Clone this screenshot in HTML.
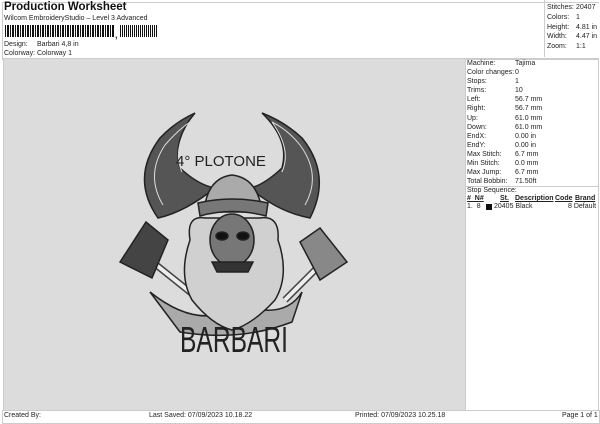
<!DOCTYPE html>
<html><head><style>
body{margin:0;width:600px;height:424px;background:#fff;font-family:"Liberation Sans",sans-serif;color:#222;position:relative;overflow:hidden}
.a{position:absolute;white-space:nowrap}
.s{font-size:7px}
</style></head><body>
<div class="a" style="left:2px;top:2px;width:596px;height:56px;border:1px solid #ccc;border-right:none;"></div>
<div class="a" style="left:4px;top:1px;font-size:11.5px;font-weight:bold;color:#111">Production Worksheet</div>
<div class="a s" style="left:4px;top:15px">Wilcom EmbroideryStudio – Level 3 Advanced</div>
<div class="a" style="left:5px;top:25px;width:110px;height:12px;background:repeating-linear-gradient(90deg,#111 0 1px,#fff 1px 2px,#111 2px 3px,#111 3px 4px,#fff 4px 5px)"></div>
<div class="a" style="left:120px;top:25px;width:37px;height:12px;background:repeating-linear-gradient(90deg,#111 0 1px,#fff 1px 2px,#111 2px 3px,#fff 3px 4px)"></div>
<div class="a" style="left:115px;top:30px;font-size:9px;font-weight:bold">,</div>
<div class="a s" style="left:4px;top:41px">Design:</div><div class="a s" style="left:37px;top:41px">Barbari 4,8 in</div>
<div class="a s" style="left:4px;top:50px">Colorway:</div><div class="a s" style="left:37px;top:50px">Colorway 1</div>
<div class="a" style="left:544px;top:0;width:1px;height:57px;background:#ccc"></div>
<div class="a s" style="left:547px;top:3px;line-height:9.8px">Stitches:<br>Colors:<br>Height:<br>Width:<br>Zoom:</div>
<div class="a s" style="left:576px;top:3px;line-height:9.8px">20407<br>1<br>4.81 in<br>4.47 in<br>1:1</div>
<div class="a" style="left:3px;top:58px;width:461px;height:351px;background:#dcdcdc;border:1px solid #ccc"></div>
<div class="a" style="left:464px;top:58px;width:134px;height:351px;border:1px solid #ccc;border-left:none"></div>
<div class="a s" style="left:467px;top:59px;line-height:9.1px">Machine:<br>Color changes:<br>Stops:<br>Trims:<br>Left:<br>Right:<br>Up:<br>Down:<br>EndX:<br>EndY:<br>Max Stitch:<br>Min Stitch:<br>Max Jump:<br>Total Bobbin:<br>Stop Sequence:</div>
<div class="a s" style="left:515px;top:59px;line-height:9.1px">Tajima<br>0<br>1<br>10<br>56.7 mm<br>56.7 mm<br>61.0 mm<br>61.0 mm<br>0.00 in<br>0.00 in<br>6.7 mm<br>0.0 mm<br>6.7 mm<br>71.50ft</div>
<div class="a" style="left:465px;top:186px;width:133px;height:1px;background:#ccc"></div>
<div class="a s" style="left:467px;top:195px;font-weight:bold;text-decoration:underline">#&nbsp; N#</div>
<div class="a s" style="left:500px;top:195px;font-weight:bold;text-decoration:underline">St.</div>
<div class="a s" style="left:515px;top:195px;font-weight:bold;text-decoration:underline">Description</div>
<div class="a s" style="left:555px;top:195px;font-weight:bold;text-decoration:underline">Code</div>
<div class="a s" style="left:575px;top:195px;font-weight:bold;text-decoration:underline">Brand</div>
<div class="a s" style="left:467px;top:203px">1.&nbsp; 8</div>
<div class="a" style="left:486px;top:204px;width:6px;height:6px;background:#111"></div>
<div class="a s" style="left:494px;top:203px">20405 Black</div>
<div class="a s" style="left:568px;top:203px">8 Default</div>
<div class="a" style="left:2px;top:410px;width:596px;height:12px;border:1px solid #ccc"></div>
<div class="a s" style="left:4px;top:412px">Created By:</div>
<div class="a s" style="left:149px;top:412px">Last Saved: 07/09/2023 10.18.22</div>
<div class="a s" style="left:355px;top:412px">Printed: 07/09/2023 10.25.18</div>
<div class="a s" style="left:562px;top:412px">Page 1 of 1</div>
<svg class="a" style="left:0;top:0" width="600" height="424">
<g stroke="#222" fill="#fff" stroke-width="1.5">
<path d="M150 260 L200 300 M285 300 L330 255" stroke-width="7" stroke="#444"/>
<path d="M150 260 L200 300 M285 300 L330 255" stroke-width="4" stroke="#eee"/>
<path d="M120 262 L146 222 L168 240 L152 278 Z" fill="#444"/>
<path d="M347 262 L320 228 L300 242 L320 280 Z" fill="#888"/>
<path d="M150 292 Q200 332 240 305 Q285 320 302 292 L292 322 Q240 342 180 332 Z" fill="#aaa"/>
<path d="M158 218 Q130 178 160 138 Q175 122 195 113 Q172 140 180 168 Q198 185 215 188 Q185 212 158 218 Z" fill="#555"/>
<path d="M163 205 Q145 175 165 145 Q178 130 190 122 Q172 150 182 172" fill="none" stroke="#ddd" stroke-width="1"/>
<path d="M310 218 Q332 175 302 138 Q285 122 262 113 Q290 140 282 168 Q264 185 250 188 Q278 212 310 218 Z" fill="#555"/>
<path d="M305 205 Q322 175 300 145 Q288 130 272 122 Q292 150 282 172" fill="none" stroke="#ddd" stroke-width="1"/>
<path d="M204 212 Q207 178 232 175 Q258 178 262 212 Z" fill="#aaa"/>
<path d="M198 203 Q232 195 268 203 L266 216 Q232 207 200 216 Z" fill="#777"/>
<path d="M190 240 Q186 215 205 218 L260 218 Q280 215 278 240 Q290 275 275 300 Q252 325 232 330 Q212 325 192 300 Q178 275 190 240 Z" fill="#d0d0d0"/>
<ellipse cx="232" cy="240" rx="22" ry="26" fill="#777"/>
<ellipse cx="222" cy="236" rx="6" ry="4" fill="#111"/><ellipse cx="243" cy="236" rx="6" ry="4" fill="#111"/>
<path d="M212 262 L253 262 L248 272 L217 272 Z" fill="#333"/>
</g>
<text x="176" y="166" font-family="Liberation Sans" font-size="15" fill="#222">4° PLOTONE</text>
<text x="180" y="352" font-family="Liberation Sans Narrow,Liberation Sans" font-size="36" fill="#222" textLength="108" lengthAdjust="spacingAndGlyphs">BARBARI</text>
</svg>
</body></html>
